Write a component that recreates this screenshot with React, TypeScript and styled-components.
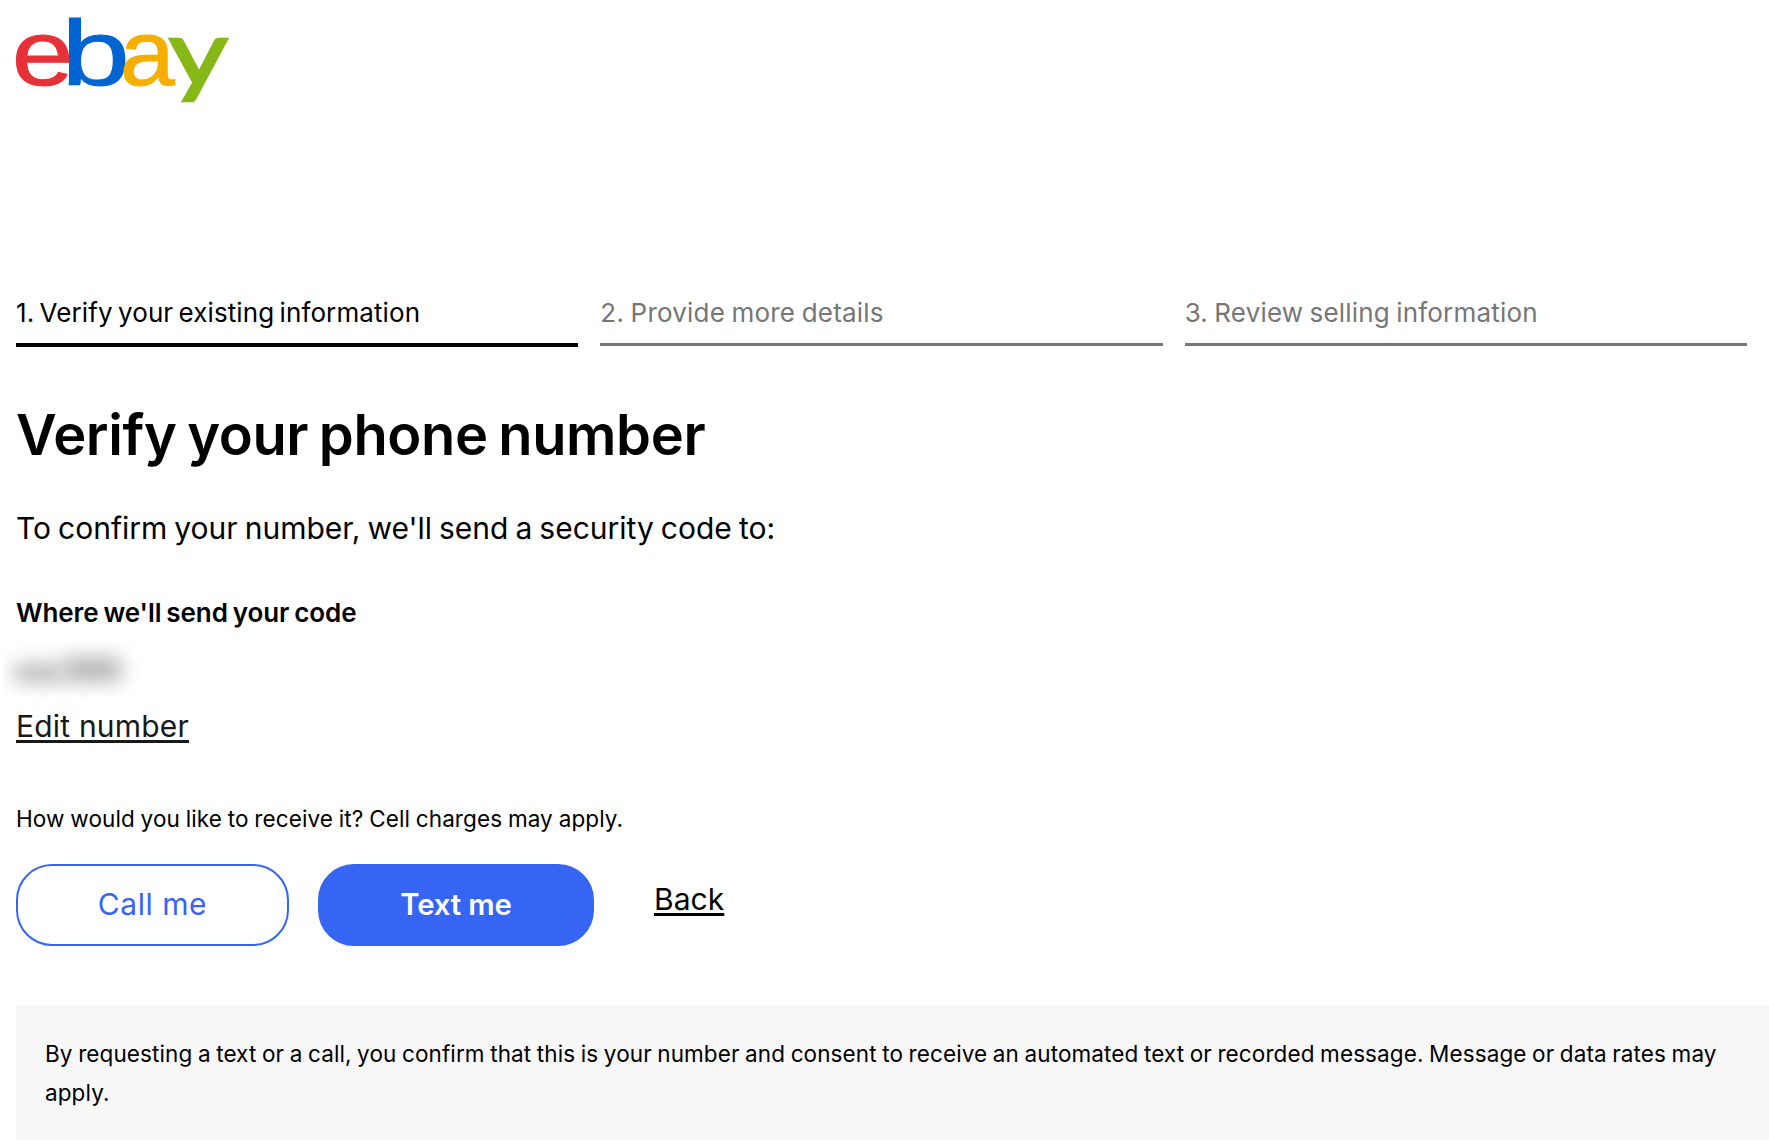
import React from "react";
import styled, { createGlobalStyle } from "styled-components";

const GlobalStyle = createGlobalStyle`
  * { box-sizing: border-box; }
  html, body { margin: 0; background: #fff; }
  body {
    color: #000;
    font-family: Inter, "Liberation Sans", sans-serif;
    overflow: hidden;
  }
`;

const Page = styled.main`
  display: flex;
  flex-direction: column;
  height: 1147px;
  padding-left: 16px;
`;

const Header = styled.header`
  height: 297px;
  margin-left: -16px;
`;

const Logo = styled.svg`
  display: block;
`;

const Steps = styled.ol`
  display: grid;
  grid-template-columns: repeat(3, 1fr);
  column-gap: 22px;
  align-items: start;
  height: 50px;
  margin: 0 22px 0 0;
  padding: 0;
  list-style: none;
`;

const Step = styled.li<{ $active?: boolean; $tracking: number; $gap: number }>`
  padding-bottom: 14px;
  border-bottom: ${(p) => (p.$active ? "4px solid #000" : "3px solid #767676")};
  color: ${(p) => (p.$active ? "#000" : "#767676")};
  font-size: 26px;
  line-height: 32px;
  letter-spacing: ${(p) => p.$tracking}px;
  word-spacing: ${(p) => p.$gap}px;
`;

const Title = styled.h1`
  margin: 54px 0 0;
  font-size: 56px;
  font-weight: 600;
  line-height: 68px;
  letter-spacing: -0.39px;
  word-spacing: -3px;
`;

const Lead = styled.p`
  margin: 39px 0 0;
  font-size: 30px;
  line-height: 40px;
  word-spacing: -1.4px;
`;

const FieldLabel = styled.h2`
  margin: 49px 0 0;
  font-size: 26px;
  font-weight: 600;
  line-height: 32px;
  letter-spacing: -0.09px;
  word-spacing: -1.5px;
`;

const MaskedNumber = styled.div`
  display: flex;
  align-items: flex-end;
  width: 152px;
  height: 56px;
  margin: 12px 0 0 -13px;
  padding: 0 0 15px 11px;
  overflow: hidden;
`;

const Smudge = styled.span<{ $width: number; $height: number }>`
  width: ${(p) => p.$width}px;
  height: ${(p) => p.$height}px;
  background: #b6b6b6;
  filter: blur(9.5px);
`;

const TextLink = styled.a<{ $color: string; $tracking: number }>`
  align-self: flex-start;
  color: ${(p) => p.$color};
  font-size: 30px;
  line-height: 40px;
  letter-spacing: ${(p) => p.$tracking}px;
  text-decoration: underline;
  text-decoration-thickness: 2.6px;
  text-underline-offset: 3px;
`;

const EditRow = styled.div`
  display: flex;
  margin-top: 9px;
`;

const Question = styled.p`
  margin: 57px 0 0;
  font-size: 22.5px;
  line-height: 32px;
  letter-spacing: 0.09px;
  word-spacing: -0.6px;
`;

const Actions = styled.div`
  display: flex;
  height: 82px;
  margin-top: 29px;
`;

const Button = styled.button<{ $primary?: boolean }>`
  width: ${(p) => (p.$primary ? 276 : 273)}px;
  height: 82px;
  margin: 0 ${(p) => (p.$primary ? 60 : 29)}px 0 0;
  padding: 0 0 2px;
  border: 2px solid #3665f3;
  border-radius: 36px;
  background: ${(p) => (p.$primary ? "#3665f3" : "#fff")};
  color: ${(p) => (p.$primary ? "#fff" : "#3665f3")};
  font-family: inherit;
  font-size: ${(p) => (p.$primary ? 29.3 : 30)}px;
  font-weight: ${(p) => (p.$primary ? 600 : 400)};
  letter-spacing: ${(p) => (p.$primary ? -0.1 : 0.55)}px;
`;

const BackSlot = styled.div`
  display: flex;
  padding-top: 15px;
`;

const Notice = styled.section`
  height: 135px;
  margin-top: 59px;
  padding: 30px 40px 0 29px;
  background: #f7f7f7;
  font-size: 22.5px;
  line-height: 38.7px;
  letter-spacing: 0.1px;
  word-spacing: -0.87px;
`;

const SANS = '"Liberation Sans", Arial, sans-serif';

const letters = [
  { ch: "e", x: 11.8, scale: 1.21, size: 92, weight: 1, font: SANS, color: "#e53238" },
  { ch: "b", x: 61.2, scale: 1.33, size: 93, weight: 0.9, font: SANS, color: "#0064d2" },
  { ch: "a", x: 120, scale: 1.07, size: 92, weight: 1.2, font: SANS, color: "#f5af02" },
  { ch: "y", x: 169, scale: 1.25, size: 91, weight: 2.6, font: "Lato, sans-serif", color: "#86b817" },
];

export default function App() {
  return (
    <>
      <GlobalStyle />
      <Page>
        <Header>
          <Logo width="250" height="120" role="img" aria-label="ebay">
            {letters.map((l) => (
              <text
                key={l.ch}
                transform={`translate(${l.x} 85.3) scale(${l.scale} 1)`}
                fill={l.color}
                stroke={l.color}
                strokeWidth={l.weight}
                fontFamily={l.font}
                fontSize={l.size}
              >
                {l.ch}
              </text>
            ))}
          </Logo>
        </Header>
        <Steps>
          <Step $active $tracking={0.1} $gap={-2.1}>1. Verify your existing information</Step>
          <Step $tracking={0.2} $gap={-1}>2. Provide more details</Step>
          <Step $tracking={0.2} $gap={-1.3}>3. Review selling information</Step>
        </Steps>
        <Title>Verify your phone number</Title>
        <Lead>To confirm your number, we'll send a security code to:</Lead>
        <FieldLabel>Where we'll send your code</FieldLabel>
        <MaskedNumber>
          <Smudge $width={50} $height={18} />
          <Smudge $width={57} $height={25} />
        </MaskedNumber>
        <EditRow>
          <TextLink $color="#191919" $tracking={0.2}>Edit number</TextLink>
        </EditRow>
        <Question>How would you like to receive it? Cell charges may apply.</Question>
        <Actions>
          <Button>Call me</Button>
          <Button $primary>Text me</Button>
          <BackSlot>
            <TextLink $color="#000" $tracking={0.05}>Back</TextLink>
          </BackSlot>
        </Actions>
        <Notice>
          By requesting a text or a call, you confirm that this is your number and consent to receive an
          automated text or recorded message. Message or data rates may apply.
        </Notice>
      </Page>
    </>
  );
}
